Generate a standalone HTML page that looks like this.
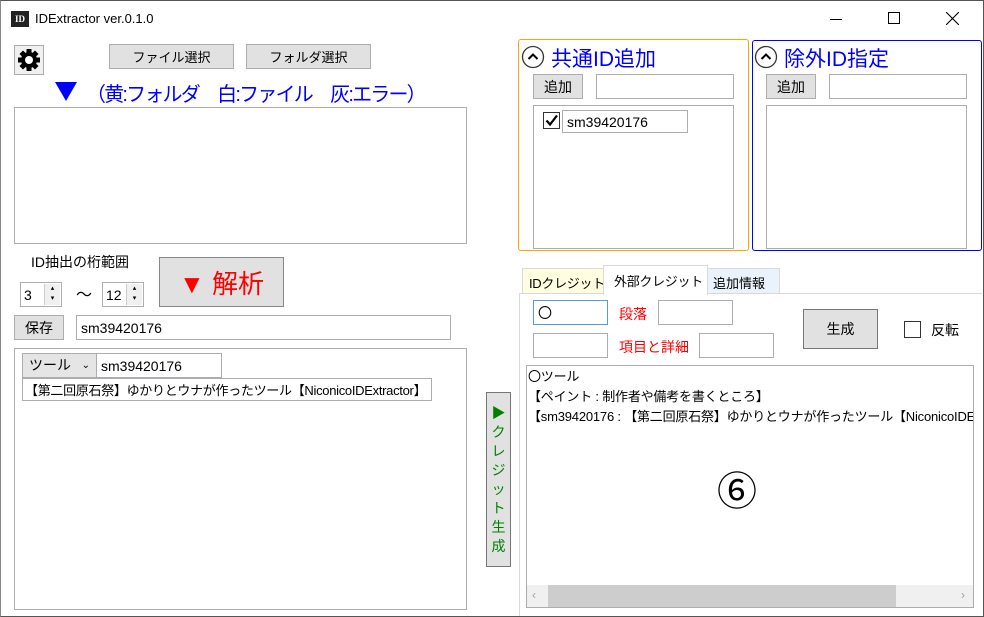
<!DOCTYPE html>
<html><head><meta charset="utf-8"><style>
*{box-sizing:border-box;margin:0;padding:0}
body{width:984px;height:617px;background:#fff;position:relative;overflow:hidden;font-family:"Liberation Sans","Noto Sans CJK JP",sans-serif;color:#000}
.a{position:absolute}
.btn{position:absolute;background:#e1e1e1;border:1px solid #adadad;font-size:13px;display:flex;align-items:center;justify-content:center;white-space:nowrap}
.tb{position:absolute;background:#fff;border:1px solid #abadb3;font-size:14px;padding-left:4px;display:flex;align-items:center;white-space:nowrap;overflow:hidden}
.box{position:absolute;border:1px solid #abadb3;background:#fff}
.t{position:absolute;white-space:nowrap}
</style></head><body>
<div class="a" style="left:0;top:0;width:984px;height:617px;border:1px solid #555;border-left-color:#888;z-index:10;pointer-events:none"></div>
<div class="a" style="left:11px;top:11px;width:18px;height:16px;background:#222;color:#fff;font:bold 9px 'Liberation Serif',serif;display:flex;align-items:center;justify-content:center">ID</div>
<div class="t" style="left:35px;top:11px;font-size:13px">IDExtractor ver.0.1.0</div>
<div class="a" style="left:830px;top:19px;width:12px;height:1px;background:#000"></div>
<div class="a" style="left:888px;top:12px;width:12px;height:12px;border:1px solid #000"></div>
<svg class="a" style="left:946px;top:12px" width="13" height="13"><path d="M0 0L13 13M13 0L0 13" stroke="#000" stroke-width="1.1"/></svg>

<div class="btn" style="left:14px;top:45px;width:30px;height:30px;background:#f0f0f0">
<svg width="24" height="24" viewBox="0 0 24 24"><g fill="#000"><circle cx="12" cy="12" r="8"/><rect x="9.5" y="1" width="5" height="22"/><rect x="1" y="9.5" width="22" height="5"/><rect x="9.5" y="1" width="5" height="22" transform="rotate(45 12 12)"/><rect x="9.5" y="1" width="5" height="22" transform="rotate(-45 12 12)"/></g><circle cx="12" cy="12" r="4" fill="#fff"/></svg></div>
<div class="btn" style="left:109px;top:44px;width:125px;height:25px">ファイル選択</div>
<div class="btn" style="left:246px;top:44px;width:125px;height:25px">フォルダ選択</div>
<svg class="a" style="left:55px;top:82px" width="22" height="19"><path d="M0 0H22L11 19Z" fill="#0000ff"/></svg>
<div class="t" style="left:86px;top:78px;font-size:20px;color:#0000ff;letter-spacing:-1.8px">（黄:フォルダ　白:ファイル　灰:エラー）</div>
<div class="box" style="left:14px;top:107px;width:453px;height:137px"></div>
<div class="t" style="left:31px;top:252px;font-size:14px">ID抽出の桁範囲</div>
<div class="tb" style="left:20px;top:282px;width:42px;height:25px;padding-left:3px">3</div>
<div class="a" style="left:44px;top:284px;width:16px;height:21px;border-left:1px solid #ccc;background:#f0f0f0;font-size:7px;line-height:10px;text-align:center">▴<br>▾</div>
<div class="t" style="left:76px;top:281px;font-size:16px">〜</div>
<div class="tb" style="left:102px;top:282px;width:42px;height:25px;padding-left:3px">12</div>
<div class="a" style="left:126px;top:284px;width:16px;height:21px;border-left:1px solid #ccc;background:#f0f0f0;font-size:7px;line-height:10px;text-align:center">▴<br>▾</div>
<div class="btn" style="left:159px;top:257px;width:125px;height:50px;border-color:#888;font-size:26px;color:#ff0000">▼ 解析</div>
<div class="btn" style="left:14px;top:315px;width:50px;height:25px;font-size:14px">保存</div>
<div class="tb" style="left:76px;top:315px;width:375px;height:25px">sm39420176</div>
<div class="box" style="left:14px;top:348px;width:453px;height:262px"></div>
<div class="a" style="left:22px;top:353px;width:75px;height:25px;background:#e5e5e5;border:1px solid #acacac;font-size:14px;padding-left:6px;line-height:23px">ツール<span style="position:absolute;right:6px;font-size:10px">⌄</span></div>
<div class="tb" style="left:96px;top:353px;width:126px;height:25px">sm39420176</div>
<div class="tb" style="left:22px;top:378px;width:410px;height:23px;padding-left:2px;font-size:13px;letter-spacing:-0.3px">【第二回原石祭】ゆかりとウナが作ったツール【NiconicoIDExtractor】</div>

<div class="btn" style="left:486px;top:392px;width:25px;height:175px;flex-direction:column;color:#008000;font-size:14px;line-height:19px;border-color:#777">▶<br>ク<br>レ<br>ジ<br>ッ<br>ト<br>生<br>成</div>

<div class="a" style="left:518px;top:39px;width:231px;height:212px;border:1.5px solid #ffa500;border-radius:3px"></div>
<div class="a" style="left:752px;top:40px;width:230px;height:211px;border:1.5px solid #0000ff;border-radius:3px"></div>
<svg class="a" style="left:521px;top:45px" width="24" height="24"><circle cx="12" cy="12" r="10.5" fill="none" stroke="#333" stroke-width="1.3"/><path d="M7.5 14L12 9.5L16.5 14" fill="none" stroke="#000" stroke-width="2"/></svg>
<div class="t" style="left:551px;top:43px;font-size:21px;color:#0000ff">共通ID追加</div>
<svg class="a" style="left:754px;top:45px" width="24" height="24"><circle cx="12" cy="12" r="10.5" fill="none" stroke="#333" stroke-width="1.3"/><path d="M7.5 14L12 9.5L16.5 14" fill="none" stroke="#000" stroke-width="2"/></svg>
<div class="t" style="left:784px;top:43px;font-size:21px;color:#0000ff">除外ID指定</div>
<div class="btn" style="left:533px;top:74px;width:50px;height:25px;font-size:14px">追加</div>
<div class="tb" style="left:596px;top:74px;width:138px;height:25px"></div>
<div class="box" style="left:533px;top:105px;width:201px;height:144px"></div>
<div class="a" style="left:543px;top:112px;width:17px;height:17px;border:1px solid #333;background:#fff"></div>
<svg class="a" style="left:544px;top:113px" width="15" height="15"><path d="M2.5 7.5L6 11.5L13 2.5" fill="none" stroke="#000" stroke-width="2.2"/></svg>
<div class="tb" style="left:562px;top:110px;width:126px;height:23px">sm39420176</div>
<div class="btn" style="left:766px;top:74px;width:50px;height:25px;font-size:14px">追加</div>
<div class="tb" style="left:829px;top:74px;width:138px;height:25px"></div>
<div class="box" style="left:766px;top:105px;width:201px;height:144px"></div>

<div class="a" style="left:519px;top:293px;width:463px;height:324px;border:1px solid #d9d9d9;border-bottom:none;border-right:none"></div>
<div class="a" style="left:522px;top:268px;width:82px;height:26px;background:#fffde0;border:1px solid #d9d9d9;font-size:13px;padding:4px 0 0 6px;white-space:nowrap;letter-spacing:-0.3px">IDクレジット</div>
<div class="a" style="left:707px;top:268px;width:73px;height:26px;background:#eaf3fc;border:1px solid #d9d9d9;font-size:13px;padding:4px 0 0 5px;white-space:nowrap">追加情報</div>
<div class="a" style="left:603px;top:265px;width:105px;height:30px;background:#fff;border:1px solid #d9d9d9;border-bottom:none;font-size:13px;padding:5px 0 0 10px;white-space:nowrap;letter-spacing:-0.3px">外部クレジット</div>

<div class="tb" style="left:533px;top:300px;width:75px;height:25px;border-color:#5b9bd5">〇</div>
<div class="t" style="left:619px;top:304px;font-size:14px;color:#ff0000">段落</div>
<div class="tb" style="left:658px;top:300px;width:75px;height:25px"></div>
<div class="tb" style="left:533px;top:333px;width:75px;height:25px"></div>
<div class="t" style="left:619px;top:337px;font-size:14px;color:#ff0000">項目と詳細</div>
<div class="tb" style="left:699px;top:333px;width:75px;height:25px"></div>
<div class="btn" style="left:803px;top:309px;width:75px;height:40px;font-size:14px;border-color:#777">生成</div>
<div class="a" style="left:904px;top:321px;width:17px;height:17px;border:1px solid #333"></div>
<div class="t" style="left:931px;top:320px;font-size:14px">反転</div>

<div class="box" style="left:526px;top:365px;width:448px;height:243px;overflow:hidden">
<div class="t" style="left:1px;top:1px;font-size:13px;line-height:20px;letter-spacing:-0.2px">〇ツール<br>【ペイント : 制作者や備考を書くところ】<br>【sm39420176 : 【第二回原石祭】ゆかりとウナが作ったツール【NiconicoIDExtractor】</div>
<div class="t" style="left:190px;top:93px;font-size:40px">⑥</div>
<div class="a" style="left:0;top:219px;width:446px;height:22px;background:#f0f0f0"></div>
<div class="a" style="left:21px;top:219px;width:348px;height:22px;background:#cdcdcd"></div>
<div class="t" style="left:5px;top:222px;font-size:12px;color:#a0a0a0">‹</div>
<div class="t" style="left:434px;top:222px;font-size:12px;color:#a0a0a0">›</div>
</div>
</body></html>
